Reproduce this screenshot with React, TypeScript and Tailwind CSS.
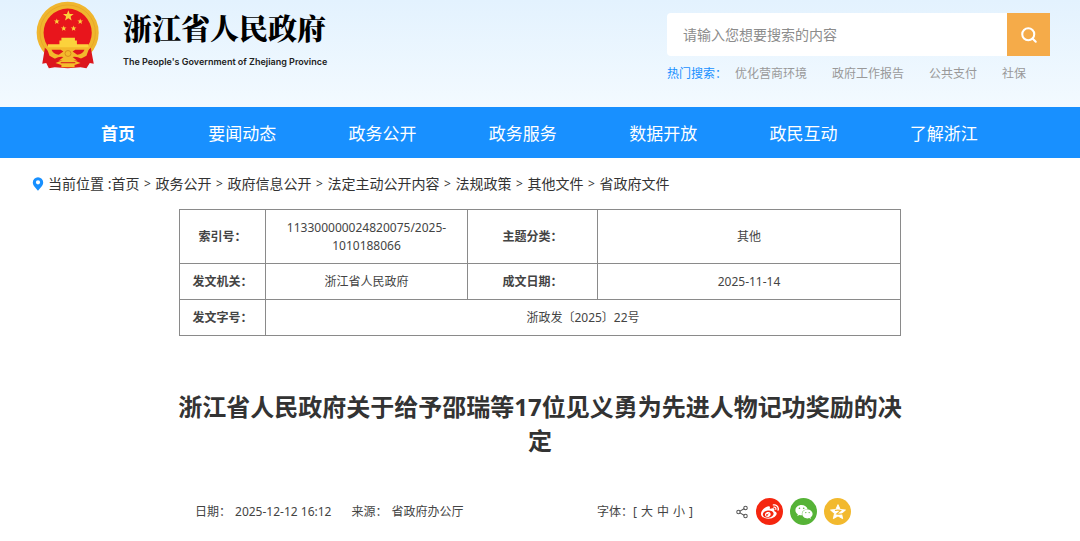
import React from "react";
import { Search, Share2 } from "lucide-react";
import { FaWeibo, FaWeixin } from "react-icons/fa";

const navItems = ["要闻动态", "政务公开", "政务服务", "数据开放", "政民互动", "了解浙江"];
const hotWords = ["优化营商环境", "政府工作报告", "公共支付", "社保"];
const crumbs = ["首页", "政务公开", "政府信息公开", "法定主动公开内容", "法规政策", "其他文件", "省政府文件"];

function star(cx: number, cy: number, r: number) {
  return Array.from({ length: 10 }, (_, i) => {
    const a = (Math.PI / 5) * i - Math.PI / 2;
    const d = i % 2 ? r * 0.42 : r;
    return `${(cx + d * Math.cos(a)).toFixed(1)},${(cy + d * Math.sin(a)).toFixed(1)}`;
  }).join(" ");
}

function Emblem() {
  return (
    <svg viewBox="12 0 200 210" className="h-[70px] w-[66px] shrink-0" aria-hidden="true">
      <circle cx="111" cy="98" r="94" fill="#f0b62e" />
      <circle cx="111" cy="98" r="84" fill="none" stroke="#e2a026" strokeWidth="2" />
      <circle cx="111" cy="98" r="73" fill="#e8151c" />
      <path d="M42 144 L34 192 L46 190 L54 206 L72 203 L111 206 L150 203 L168 206 L178 190 L190 192 L181 144 L150 172 H72Z" fill="#dc161c" />
      <path d="M46 140 H178 L168 168 L140 182 H82 L56 168Z" fill="#f3b92c" />
      <path d="M62 150 H90 L98 155 L84 165 Q68 164 62 150Z M162 150 H134 L126 155 L140 165 Q156 164 162 150Z" fill="#e0161c" />
      <path d="M70 178 Q88 168 98 172 L84 183 L72 188Z M154 178 Q136 168 126 172 L140 183 L152 188Z" fill="#dc161c" />
      <g fill="#fbd23c">
        <polygon points={star(113, 47, 17)} />
        <polygon points={star(78, 64, 9)} />
        <polygon points={star(149, 64, 9)} />
        <polygon points={star(99, 85, 9)} />
        <polygon points={star(129, 85, 9)} />
        <path d="M92 113 H133 V122 H139 V133 H174 V142 H51 V133 H86 V122 H92Z" />
      </g>
      <path d="M74 190 L96 181 H128 L150 190 L132 196 V203 H92 V196Z" fill="#f5bd2b" />
      <path d="M90 189 H134" stroke="#d3141c" strokeWidth="3" />
      <circle cx="112" cy="161" r="9" fill="none" stroke="#d98c1c" strokeWidth="3" />
    </svg>
  );
}

function Pin() {
  return (
    <svg viewBox="0 0 12 14" className="mr-1 h-[14px] w-3 shrink-0" aria-hidden="true">
      <path
        fillRule="evenodd"
        fill="#1890ff"
        d="M6 0.3A5.2 5.2 0 0 0 0.8 5.5C0.8 8.8 4.4 11.6 6 13.7C7.6 11.6 11.2 8.8 11.2 5.5A5.2 5.2 0 0 0 6 0.3ZM6 3.2A2.1 2.1 0 1 1 6 7.4A2.1 2.1 0 0 1 6 3.2Z"
      />
    </svg>
  );
}

function QzoneIcon() {
  return (
    <svg viewBox="0 0 20 20" className="size-[18px]" aria-hidden="true">
      <path
        fill="#fff"
        stroke="#fff"
        strokeWidth="1"
        strokeLinejoin="round"
        d="M10 1.8L12.4 7.2L18.3 7.8L13.9 11.7L15.2 17.4L10 14.4L4.8 17.4L6.1 11.7L1.7 7.8L7.6 7.2Z"
      />
      <path d="M6.6 8.3Q10 7.6 13.1 8.3L8.5 12.1Q12 12.8 16 11.7" fill="none" stroke="#f2b92e" strokeWidth="1.2" />
    </svg>
  );
}

const cell = "border border-[#8a8a8a] px-3 text-center";

export default function App() {
  return (
    <div className="min-h-screen bg-white font-['Noto_Sans','Noto_Sans_CJK_SC',sans-serif] text-xs text-[#444]">
      <header className="flex h-[107px] items-start justify-between bg-linear-to-b from-[#e3f2fe] to-[#f3faff] pr-[30px] pl-[35px]">
        <a href="#home" className="flex items-start gap-[22px]">
          <Emblem />
          <div className="pt-2 text-black">
            <div className="font-['Noto_Serif_CJK_SC','Noto_Sans_CJK_SC',serif] text-[29px] leading-[40px] font-black">浙江省人民政府</div>
            <div className="mt-2 font-[Inter,sans-serif] text-[9px] leading-3 font-semibold text-[#222]">
              The People's Government of Zhejiang Province
            </div>
          </div>
        </a>
        <div className="w-[383px] pt-[13px]">
          <form className="flex h-[43px]" onSubmit={(e) => e.preventDefault()}>
            <input
              type="text"
              aria-label="搜索"
              placeholder="请输入您想要搜索的内容"
              className="min-w-0 flex-1 rounded-l-sm bg-white px-4 text-sm outline-none placeholder:text-[#8c8c8c]"
            />
            <button type="submit" aria-label="搜索" className="flex w-[43px] items-center justify-center bg-[#f5ab49] text-white">
              <Search size={18} strokeWidth={2.75} />
            </button>
          </form>
          <div className="mt-[9px] flex leading-[18px] text-[#999]">
            <span className="mr-2 text-[#1890ff]">热门搜索：</span>
            <div className="flex gap-[25px]">
              {hotWords.map((w) => (
                <a key={w} href="#search">{w}</a>
              ))}
            </div>
          </div>
        </div>
      </header>

      <nav className="flex h-[51px] items-center bg-[#1890ff] pt-[3px] pr-[66px] pl-[64px] text-[17px] text-white">
        <a href="#home" className="w-[108px] text-center font-bold">首页</a>
        <div className="grid flex-1 grid-cols-6">
          {navItems.map((n) => (
            <a key={n} href="#nav" className="text-center">{n}</a>
          ))}
        </div>
      </nav>

      <div className="flex h-[51px] items-center pl-8 text-sm text-[#333]">
        <Pin />
        <span>当前位置 :</span>
        {crumbs.map((c, i) => (
          <React.Fragment key={c}>
            {i > 0 && <span className="w-4 text-center text-xs">&gt;</span>}
            <a href="#crumb">{c}</a>
          </React.Fragment>
        ))}
      </div>

      <main className="mx-auto max-w-[726px]">
        <div className="px-[2px]">
          <table className="w-full table-fixed border-collapse leading-[18px]">
            <colgroup>
              <col className="w-[86px]" />
              <col className="w-[202px]" />
              <col className="w-[130px]" />
              <col />
            </colgroup>
            <tbody>
              <tr className="h-[54px]">
                <th className={cell}>索引号：</th>
                <td className={cell}>113300000024820075/2025-1010188066</td>
                <th className={cell}>主题分类：</th>
                <td className={cell}>其他</td>
              </tr>
              <tr className="h-9">
                <th className={cell}>发文机关：</th>
                <td className={cell}>浙江省人民政府</td>
                <th className={cell}>成文日期：</th>
                <td className={cell}>2025-11-14</td>
              </tr>
              <tr className="h-9">
                <th className={cell}>发文字号：</th>
                <td className={cell} colSpan={3}>浙政发〔2025〕22号</td>
              </tr>
            </tbody>
          </table>
        </div>

        <h1 className="mt-[54px] text-center text-2xl leading-[34px] font-bold text-[#333]">
          浙江省人民政府关于给予邵瑞等17位见义勇为先进人物记功奖励的决定
        </h1>

        <div className="mt-10 flex items-center pr-[52px] pl-[18px]">
          <span>日期：</span>
          <span className="ml-1">2025-12-12 16:12</span>
          <span className="ml-5">来源：</span>
          <span className="ml-1">省政府办公厅</span>
          <div className="ml-auto flex items-center">
            <span>字体：</span>
            <span className="flex gap-1">
              [<button type="button">大</button>
              <button type="button">中</button>
              <button type="button">小</button>]
            </span>
            <div className="ml-[42px] flex items-center gap-[7px]">
              <Share2 size={14} strokeWidth={1.75} className="text-[#555]" />
              <a href="#weibo" aria-label="微博" className="flex size-[27px] items-center justify-center rounded-full bg-[#f5260f] text-white">
                <FaWeibo size={18} />
              </a>
              <a href="#weixin" aria-label="微信" className="flex size-[27px] items-center justify-center rounded-full bg-[#56b337] text-white">
                <FaWeixin size={18} />
              </a>
              <a href="#qzone" aria-label="QQ空间" className="flex size-[27px] items-center justify-center rounded-full bg-[#f2b92e] text-white">
                <QzoneIcon />
              </a>
            </div>
          </div>
        </div>
      </main>
    </div>
  );
}
